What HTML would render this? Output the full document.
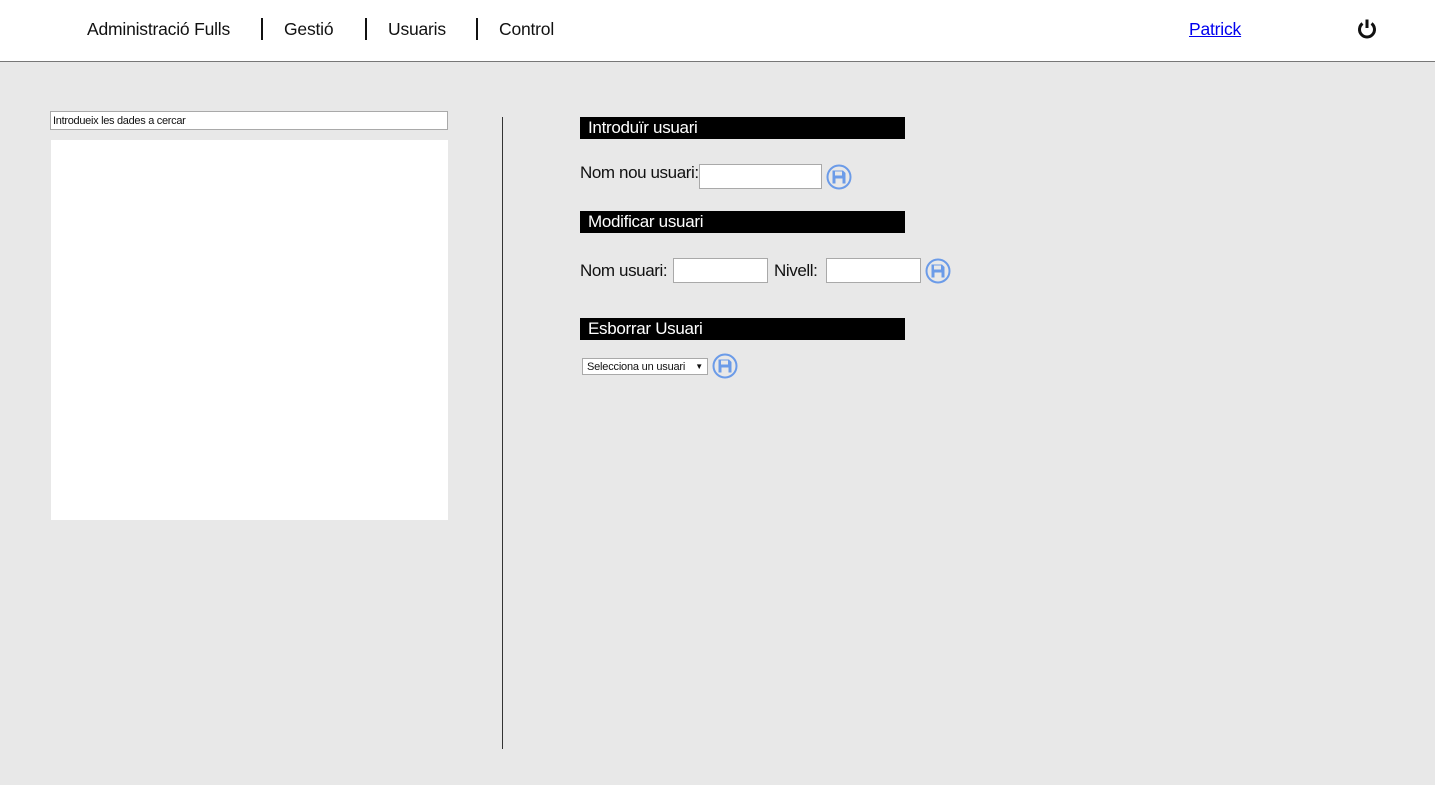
<!DOCTYPE html>
<html><head><meta charset="utf-8"><style>
*{margin:0;padding:0;box-sizing:border-box}
body{width:1442px;height:791px;background:#fff;font-family:"Liberation Sans",Arial,sans-serif;position:relative;overflow:hidden}
.a{position:absolute;white-space:nowrap}
.nav{font-size:17.5px;color:#111;top:19px;letter-spacing:-0.2px}
.bar{position:absolute;top:18px;width:2px;height:22px;background:#111}
.main{position:absolute;left:0;top:61px;width:1435px;height:724px;background:#e8e8e8;border-top:1px solid #777}
.hd{position:absolute;left:580px;width:325px;height:22px;background:#000;color:#fff;font-size:17px;padding-left:8px;line-height:22px;letter-spacing:-0.3px}
.lbl{font-size:17px;color:#111;letter-spacing:-0.4px}
.inp{position:absolute;background:#fff;border:1px solid #a9a9a9;height:25px}
svg.s{position:absolute;width:26px;height:26px}
</style></head><body>
<div class="a nav" style="left:87px">Administració Fulls</div>
<div class="bar" style="left:261px"></div>
<div class="a nav" style="left:284px">Gestió</div>
<div class="bar" style="left:365px"></div>
<div class="a nav" style="left:388px">Usuaris</div>
<div class="bar" style="left:476px"></div>
<div class="a nav" style="left:499px">Control</div>
<div class="a nav" style="left:1189px;color:#0000ee;text-decoration:underline">Patrick</div>
<svg class="a" style="left:1356px;top:18px" width="22" height="22" viewBox="0 0 22 22"><path d="M6.5 5.5A7.5 7.5 0 1 0 15.5 5.5" fill="none" stroke="#111" stroke-width="3"/><line x1="11" y1="1.5" x2="11" y2="10" stroke="#111" stroke-width="3"/></svg>
<div class="main"></div>
<div class="inp" style="left:50px;top:111px;width:398px;height:19px;font-size:11px;padding:2px;color:#111;line-height:14px;letter-spacing:-0.3px">Introdueix les dades a cercar</div>
<div class="a" style="left:51px;top:140px;width:397px;height:380px;background:#fff"></div>
<div class="a" style="left:502px;top:117px;width:1px;height:632px;background:#333"></div>
<div class="hd" style="top:117px">Introduïr usuari</div>
<div class="a lbl" style="left:580px;top:163px">Nom nou usuari:</div>
<div class="inp" style="left:699px;top:164px;width:123px"></div>
<svg class="s" style="left:826px;top:164px" viewBox="0 0 26 26"><circle cx="13" cy="13" r="11.5" fill="none" stroke="#6b9be8" stroke-width="2"/><path d="M6.5 6.5h10.5l2.5 2.5v10.5h-13z" fill="#6b9be8"/><rect x="9" y="7.5" width="7" height="4" fill="#e8e8e8"/><rect x="9.5" y="14.5" width="7" height="5" fill="#e8e8e8"/></svg>
<div class="hd" style="top:211px">Modificar usuari</div>
<div class="a lbl" style="left:580px;top:261px">Nom usuari:</div>
<div class="inp" style="left:673px;top:258px;width:95px"></div>
<div class="a lbl" style="left:774px;top:261px">Nivell:</div>
<div class="inp" style="left:826px;top:258px;width:95px"></div>
<svg class="s" style="left:925px;top:258px" viewBox="0 0 26 26"><circle cx="13" cy="13" r="11.5" fill="none" stroke="#6b9be8" stroke-width="2"/><path d="M6.5 6.5h10.5l2.5 2.5v10.5h-13z" fill="#6b9be8"/><rect x="9" y="7.5" width="7" height="4" fill="#e8e8e8"/><rect x="9.5" y="14.5" width="7" height="5" fill="#e8e8e8"/></svg>
<div class="hd" style="top:318px">Esborrar Usuari</div>
<div class="inp" style="left:582px;top:358px;width:126px;height:17px;font-size:11px;padding:2px 4px;line-height:12px;color:#111;letter-spacing:-0.2px">Selecciona un usuari<span style="position:absolute;right:4px;font-size:8px">▼</span></div>
<svg class="s" style="left:712px;top:353px" viewBox="0 0 26 26"><circle cx="13" cy="13" r="11.5" fill="none" stroke="#6b9be8" stroke-width="2"/><path d="M6.5 6.5h10.5l2.5 2.5v10.5h-13z" fill="#6b9be8"/><rect x="9" y="7.5" width="7" height="4" fill="#e8e8e8"/><rect x="9.5" y="14.5" width="7" height="5" fill="#e8e8e8"/></svg>
</body></html>
